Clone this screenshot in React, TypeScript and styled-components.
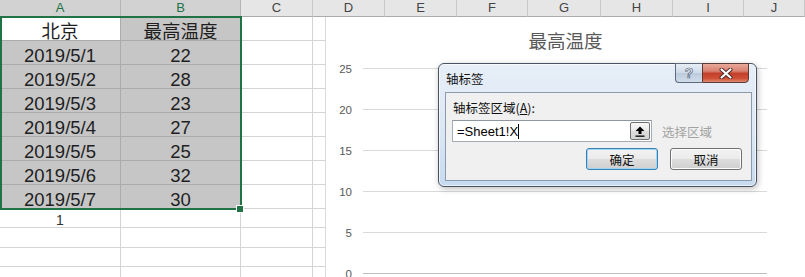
import styled, { createGlobalStyle } from "styled-components";

const GlobalStyle = createGlobalStyle`
  html, body {
    margin: 0;
    padding: 0;
    background: #fff;
    overflow: hidden;
  }
  body {
    font-family: "Liberation Sans", "Noto Sans CJK SC", sans-serif;
  }
`;

const COLUMNS = ["A", "B", "C", "D", "E", "F", "G", "H", "I", "J"];

const SHEET_ROWS: string[][] = [
  ["北京", "最高温度"],
  ["2019/5/1", "22"],
  ["2019/5/2", "28"],
  ["2019/5/3", "23"],
  ["2019/5/4", "27"],
  ["2019/5/5", "25"],
  ["2019/5/6", "32"],
  ["2019/5/7", "30"],
  ["1", ""],
  ["", ""],
  ["", ""],
  ["", ""],
];

const AXIS_TICKS = [25, 20, 15, 10, 5, 0];

const Page = styled.div`
  position: relative;
  width: 805px;
  height: 277px;
  overflow: hidden;
  background: #fff;
`;

const Sheet = styled.div`
  display: grid;
  grid-template-columns: 121px 120px 72px 72px 72px 71px 73px 72px 71px 1fr;
  grid-template-rows: 17px repeat(8, 24px) 19px 20px 19px 20px;
`;

const ColHead = styled.div<{ $sel?: boolean }>`
  box-sizing: border-box;
  display: flex;
  align-items: center;
  justify-content: center;
  background: ${(p) => (p.$sel ? "#d2d2d2" : "#e6e6e6")};
  color: ${(p) => (p.$sel ? "#217346" : "#444")};
  border-right: 1px solid ${(p) => (p.$sel ? "#b4b4b4" : "#c8c8c8")};
  border-bottom: 1px solid ${(p) => (p.$sel ? "#217346" : "#ababab")};
  font-size: 13px;
  line-height: 16px;
`;

const Cell = styled.div<{ $sel?: boolean; $active?: boolean; $small?: boolean }>`
  box-sizing: border-box;
  display: flex;
  align-items: flex-end;
  justify-content: center;
  background: ${(p) => (p.$sel && !p.$active ? "#c6c6c6" : "#fff")};
  border-right: 1px solid ${(p) => (p.$sel ? "#ababab" : "#d4d4d4")};
  border-bottom: 1px solid ${(p) => (p.$sel ? "#ababab" : "#d4d4d4")};
  color: ${(p) => (p.$small ? "#333" : "#1f1f1f")};
  font-size: ${(p) => (p.$small ? "14px" : "18.5px")};
  line-height: ${(p) => (p.$small ? "13px" : "16px")};
  white-space: nowrap;
`;

const Selection = styled.div`
  position: absolute;
  left: 0;
  top: 16px;
  width: 242px;
  height: 194px;
  box-sizing: border-box;
  border: 2px solid #217346;
  pointer-events: none;
`;

const FillHandle = styled.div`
  position: absolute;
  left: 237px;
  top: 206px;
  width: 6px;
  height: 6px;
  background: #217346;
  outline: 1px solid #fff;
`;

/* embedded chart */
const Chart = styled.div`
  position: absolute;
  left: 325px;
  top: 17px;
  right: 0;
  bottom: 0;
  box-sizing: border-box;
  background: #fff;
  border-left: 1px solid #d9d9d9;
`;

const ChartTitle = styled.div`
  box-sizing: border-box;
  height: 31px;
  padding-top: 12px;
  line-height: 22px;
  font-size: 18.5px;
  color: #595959;
  text-align: center;
  font-family: "Noto Sans CJK SC", sans-serif;
`;

const Plot = styled.div`
  display: flex;
  flex-direction: column;
`;

const AxisRow = styled.div`
  height: 41px;
  display: grid;
  grid-template-columns: 26px 404px;
  column-gap: 11px;
  align-items: center;
`;

const AxisLabel = styled.span`
  text-align: right;
  font-size: 11.5px;
  color: #595959;
`;

const GridLine = styled.div<{ $axis?: boolean }>`
  height: 1px;
  background: ${(p) => (p.$axis ? "#bfbfbf" : "#d9d9d9")};
`;

/* dialog */
const Dialog = styled.div`
  position: absolute;
  left: 438px;
  top: 63px;
  width: 319px;
  height: 124px;
  box-sizing: border-box;
  display: flex;
  flex-direction: column;
  border: 1px solid #4a5261;
  border-radius: 6px;
  background: linear-gradient(to bottom, #e7eef8 0%, #dbe7f4 55%, #c6daf0 100%);
  box-shadow: inset 0 0 0 1px rgba(255, 255, 255, 0.65), 1px 2px 6px rgba(0, 0, 0, 0.25);
  font-family: "Noto Sans CJK SC", "Liberation Sans", sans-serif;
`;

const TitleBar = styled.div`
  height: 28px;
  display: flex;
  justify-content: space-between;
  align-items: flex-start;
  padding: 0 7px;
`;

const TitleText = styled.div`
  margin-top: 6px;
  font-size: 12.5px;
  line-height: 18px;
  color: #111;
`;

const CaptionGroup = styled.div`
  display: flex;
  margin-top: -1px;
`;

const HelpButton = styled.div`
  box-sizing: border-box;
  width: 27px;
  height: 20px;
  display: flex;
  align-items: center;
  justify-content: center;
  border: 1px solid #5d6a7c;
  border-right: none;
  border-radius: 0 0 0 4px;
  background: linear-gradient(to bottom, #e6edf5 0%, #cfdbe8 48%, #bccbdd 52%, #cfdcea 100%);
  font-family: "Liberation Sans", sans-serif;
  font-weight: bold;
  font-size: 14px;
  color: #f4f7fa;
  -webkit-text-stroke: 0.7px #55657a;
`;

const CloseButton = styled.div`
  box-sizing: border-box;
  width: 47px;
  height: 20px;
  display: flex;
  align-items: center;
  justify-content: center;
  border: 1px solid #5a3a36;
  border-radius: 0 0 4px 0;
  background: linear-gradient(to bottom, #e9aa9c 0%, #d8806e 40%, #c3402b 52%, #cf4f36 80%, #e08a70 100%);
`;

const Panel = styled.div`
  flex: 1;
  margin: 0 4px 5px 6px;
  background: #f0f0f0;
  border: 1px solid #8d9aab;
  display: flex;
  flex-direction: column;
  padding: 6px 9px 0 6px;
`;

const FieldLabel = styled.div`
  margin-left: 1px;
  font-size: 12.5px;
  line-height: 17px;
  color: #111;
  u {
    text-decoration: underline;
  }
`;

const InputRow = styled.div`
  display: flex;
  align-items: center;
  gap: 10px;
  margin-top: 4px;
`;

const TextBox = styled.div`
  box-sizing: border-box;
  width: 200px;
  height: 22px;
  display: flex;
  align-items: center;
  justify-content: space-between;
  padding: 0 1px 0 4px;
  background: #fff;
  border: 1px solid #a5acb5;
  border-top-color: #8f969f;
`;

const InputValue = styled.span`
  display: flex;
  align-items: center;
  font-family: "Liberation Sans", sans-serif;
  font-size: 13px;
  color: #000;
`;

const Caret = styled.span`
  width: 1px;
  height: 15px;
  background: #000;
`;

const CollapseButton = styled.div`
  box-sizing: border-box;
  width: 20px;
  height: 18px;
  display: flex;
  align-items: center;
  justify-content: center;
  border: 1px solid #707070;
  border-radius: 2px;
  background: linear-gradient(to bottom, #f6f6f6 0%, #e9e9e9 50%, #dcdcdc 51%, #d4d4d4 100%);
`;

const Hint = styled.span`
  font-size: 12.5px;
  color: #a3a3a3;
`;

const ButtonRow = styled.div`
  display: flex;
  justify-content: flex-end;
  gap: 12px;
  margin-top: 6px;
`;

const DlgButton = styled.div<{ $default?: boolean }>`
  box-sizing: border-box;
  width: 72px;
  height: 22px;
  display: flex;
  align-items: center;
  justify-content: center;
  border: 1px solid ${(p) => (p.$default ? "#3c7fb1" : "#707070")};
  border-radius: 3px;
  background: linear-gradient(to bottom, #f2f2f2 0%, #ebebeb 50%, #dddddd 51%, #cfcfcf 100%);
  box-shadow: ${(p) => (p.$default ? "inset 0 0 0 1px #9bd6f6" : "inset 0 0 0 1px #fcfcfc")};
  font-size: 12.5px;
  color: #111;
`;

const App = () => {
  return (
    <Page>
      <GlobalStyle />
      <Sheet>
        {COLUMNS.map((c, i) => (
          <ColHead key={c} $sel={i < 2}>
            {c}
          </ColHead>
        ))}
        {SHEET_ROWS.map((row, r) =>
          COLUMNS.map((c, ci) => {
            const sel = r < 8 && ci < 2;
            return (
              <Cell
                key={`${c}${r}`}
                $sel={sel}
                $active={r === 0 && ci === 0}
                $small={r >= 8}
              >
                {ci < 2 ? row[ci] : ""}
              </Cell>
            );
          })
        )}
      </Sheet>
      <Selection />
      <FillHandle />

      <Chart>
        <ChartTitle>最高温度</ChartTitle>
        <Plot>
          {AXIS_TICKS.map((t) => (
            <AxisRow key={t}>
              <AxisLabel>{t}</AxisLabel>
              <GridLine $axis={t === 0} />
            </AxisRow>
          ))}
        </Plot>
      </Chart>

      <Dialog>
        <TitleBar>
          <TitleText>轴标签</TitleText>
          <CaptionGroup>
            <HelpButton>?</HelpButton>
            <CloseButton>
              <svg width="14" height="11" viewBox="0 0 14 11">
                <path d="M2.5 1.5 L11.5 9.5 M11.5 1.5 L2.5 9.5" stroke="#4a2420" strokeWidth="4" strokeLinecap="round" />
                <path d="M2.5 1.5 L11.5 9.5 M11.5 1.5 L2.5 9.5" stroke="#fff" strokeWidth="2.2" strokeLinecap="round" />
              </svg>
            </CloseButton>
          </CaptionGroup>
        </TitleBar>
        <Panel>
          <FieldLabel>
            轴标签区域(<u>A</u>):
          </FieldLabel>
          <InputRow>
            <TextBox>
              <InputValue>
                =Sheet1!X
                <Caret />
              </InputValue>
              <CollapseButton>
                <svg width="10" height="11" viewBox="0 0 10 11">
                  <path d="M5 0.5 L9.5 5 L6.5 5 L6.5 8 L3.5 8 L3.5 5 L0.5 5 Z" fill="#000" />
                  <rect x="0.5" y="9.5" width="9" height="1.3" fill="#000" />
                </svg>
              </CollapseButton>
            </TextBox>
            <Hint>选择区域</Hint>
          </InputRow>
          <ButtonRow>
            <DlgButton $default>确定</DlgButton>
            <DlgButton>取消</DlgButton>
          </ButtonRow>
        </Panel>
      </Dialog>
    </Page>
  );
};

export default App;
